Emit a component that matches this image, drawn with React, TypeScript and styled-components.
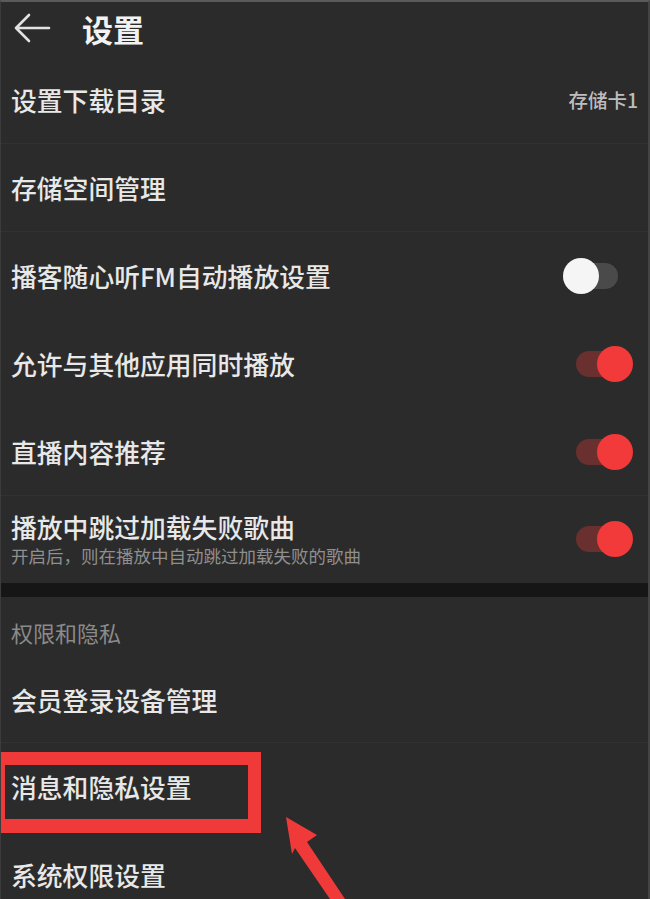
import React from 'react';
import styled, { createGlobalStyle } from 'styled-components';

const GlobalStyle = createGlobalStyle`
  html, body {
    margin: 0;
    padding: 0;
    background: #2b2b2b;
  }
  body {
    font-family: "Noto Sans CJK SC", "Noto Sans", sans-serif;
    color: #e6e6e6;
  }
`;

const Page = styled.div`
  position: relative;
  width: 650px;
  height: 899px;
  overflow: hidden;
  box-sizing: border-box;
  background: #2b2b2b;
  border-top: 2px solid #5a5a5a;
  border-left: 1px solid #3c3c3c;
  border-right: 2px solid #444;
`;

const Header = styled.header`
  display: flex;
  align-items: center;
  gap: 31px;
  height: 54px;
  box-sizing: border-box;
  padding: 0 0 2px 12px;
`;

const Title = styled.h1`
  margin: 0;
  font-size: 31px;
  font-weight: 700;
  color: #f2f2f2;
  line-height: 1;
`;

const Row = styled.div<{ $height?: number; $divider?: boolean }>`
  position: relative;
  display: flex;
  align-items: center;
  justify-content: space-between;
  height: ${p => p.$height ?? 88}px;
  box-sizing: border-box;
  padding: 0 10px 0 10px;
  border-bottom: 1px solid ${p => (p.$divider ? '#323232' : 'transparent')};
`;

const TextBlock = styled.div`
  display: flex;
  flex-direction: column;
  gap: 2px;
`;

const Label = styled.span`
  font-size: 25.8px;
  font-weight: 500;
  line-height: 32px;
  color: #e8e8e8;
`;

const Hint = styled.span`
  font-size: 17.5px;
  line-height: 22px;
  color: #8f8f8f;
`;

const Value = styled.span`
  font-size: 19.5px;
  font-weight: 500;
  color: #bdbdbd;
`;

const Band = styled.div`
  height: 14px;
  background: #161616;
`;

const SectionTitle = styled.div`
  height: 60px;
  box-sizing: border-box;
  padding: 23px 10px 0;
  font-size: 22px;
  line-height: 24px;
  color: #8a8a8a;
`;

const ToggleWrap = styled.div`
  position: relative;
  width: 70px;
  height: 36px;
  margin-right: 5px;
`;

const Track = styled.div<{ $on: boolean }>`
  position: absolute;
  top: 5px;
  left: ${p => (p.$on ? 13 : 0)}px;
  width: ${p => (p.$on ? 56 : 55)}px;
  height: 26px;
  border-radius: 13px;
  background: ${p => (p.$on ? '#6a2f2f' : '#4a4a4a')};
  filter: blur(0.6px);
`;

const Knob = styled.div<{ $on: boolean }>`
  position: absolute;
  top: 0;
  left: ${p => (p.$on ? 34 : 0)}px;
  width: 36px;
  height: 36px;
  border-radius: 50%;
  background: ${p => (p.$on ? '#f23a3a' : '#f5f5f5')};
  filter: blur(0.4px);
`;

const Highlight = styled.div`
  position: absolute;
  top: 9px;
  left: 0;
  width: 260px;
  height: 81px;
  box-sizing: border-box;
  border: 13px solid #f03a3a;
  border-left-width: 4px;
  border-bottom-width: 14px;
  pointer-events: none;
`;

const Pointer = styled.svg`
  position: absolute;
  left: 270px;
  top: 800px;
`;

const Toggle: React.FC<{ on: boolean }> = ({ on }) => (
  <ToggleWrap>
    <Track $on={on} />
    <Knob $on={on} />
  </ToggleWrap>
);

const BackIcon = () => (
  <svg width="38" height="32" viewBox="0 0 38 32" fill="none">
    <path
      d="M36 16 H3 M16 3 L3 16 L16 29"
      stroke="#e2e2e2"
      strokeWidth="2.6"
      strokeLinecap="round"
      strokeLinejoin="round"
    />
  </svg>
);

export default function App() {
  return (
    <>
      <GlobalStyle />
      <Page>
        <Header>
          <BackIcon />
          <Title>设置</Title>
        </Header>

        <Row $divider>
          <Label>设置下载目录</Label>
          <Value>存储卡1</Value>
        </Row>
        <Row $divider>
          <Label>存储空间管理</Label>
        </Row>
        <Row>
          <Label>播客随心听FM自动播放设置</Label>
          <Toggle on={false} />
        </Row>
        <Row>
          <Label>允许与其他应用同时播放</Label>
          <Toggle on />
        </Row>
        <Row $divider>
          <Label>直播内容推荐</Label>
          <Toggle on />
        </Row>
        <Row $height={87}>
          <TextBlock>
            <Label>播放中跳过加载失败歌曲</Label>
            <Hint>开启后，则在播放中自动跳过加载失败的歌曲</Hint>
          </TextBlock>
          <Toggle on />
        </Row>

        <Band />
        <SectionTitle>权限和隐私</SectionTitle>

        <Row $height={86} $divider>
          <Label>会员登录设备管理</Label>
        </Row>
        <Row>
          <Label>消息和隐私设置</Label>
          <Highlight />
        </Row>
        <Row>
          <Label>系统权限设置</Label>
        </Row>

        <Pointer width="90" height="100" viewBox="0 0 90 100">
          <polygon
            points="15,15 46,33 36,40 76,100 61,100 24,46 21,52"
            fill="#f03a3a"
          />
        </Pointer>
      </Page>
    </>
  );
}
